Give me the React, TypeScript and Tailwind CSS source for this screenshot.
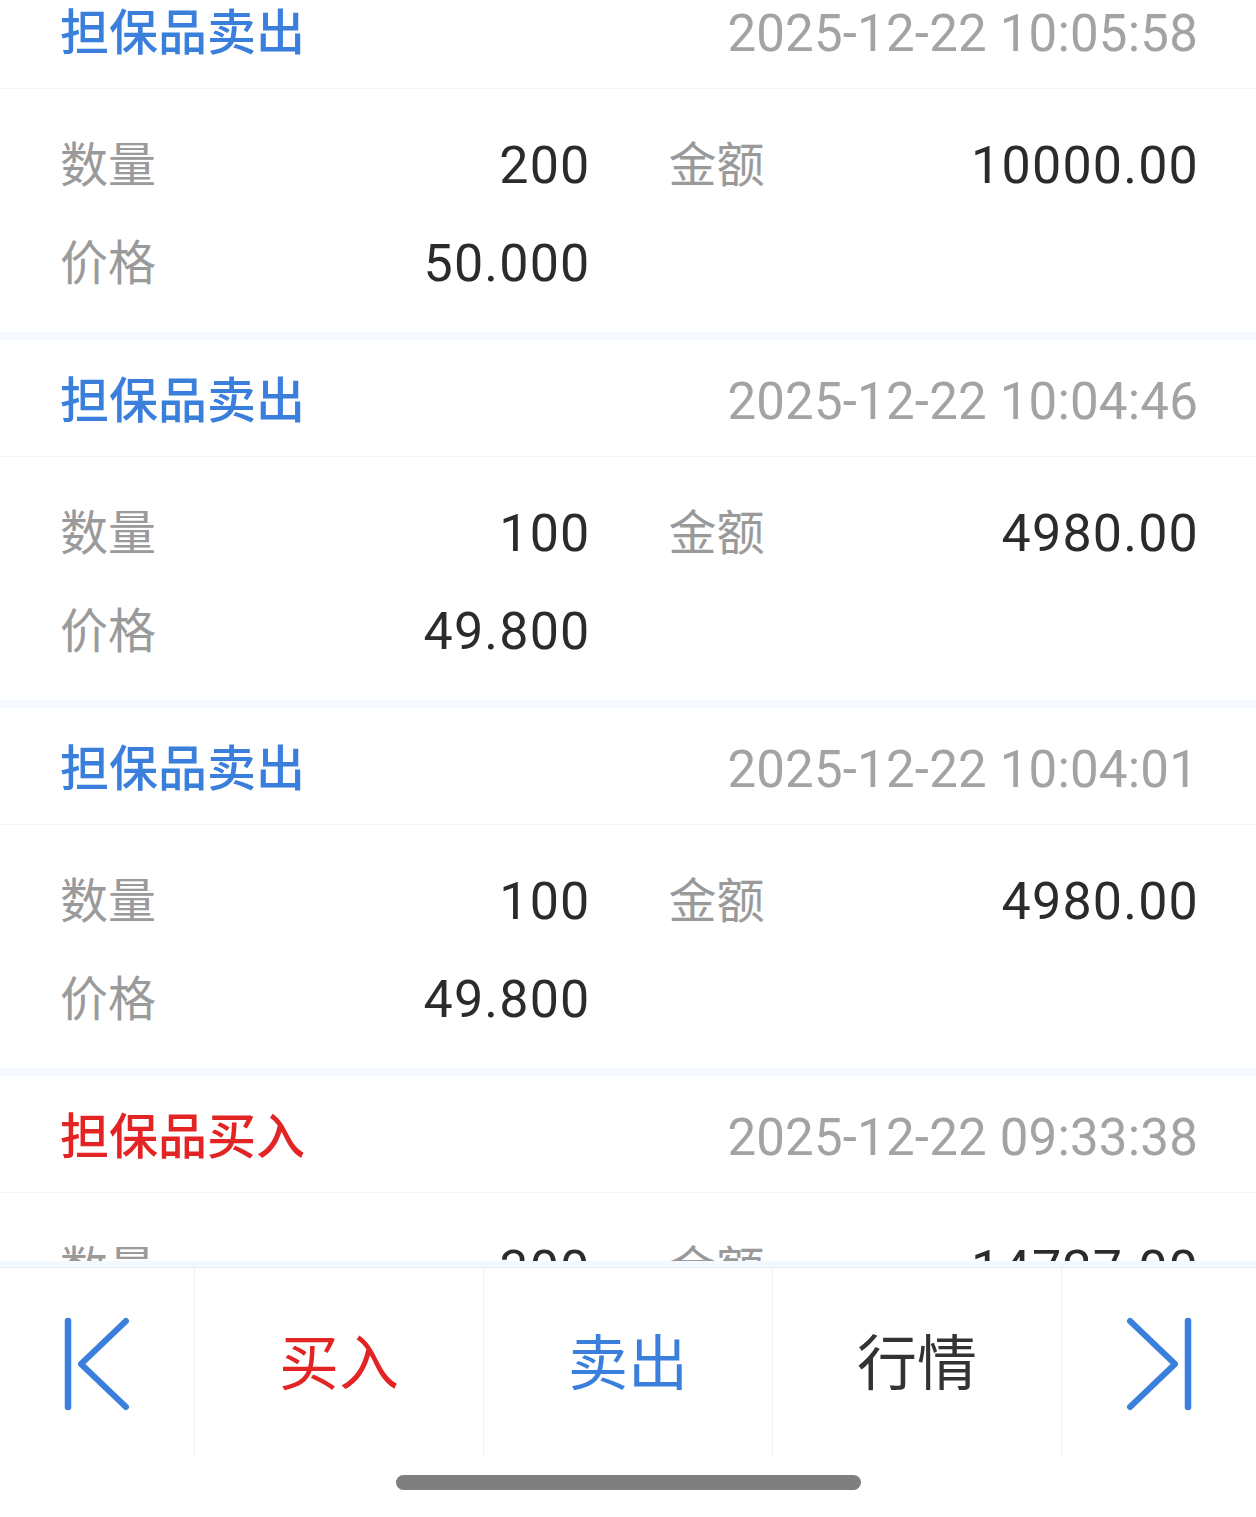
import React from "react";

type Rec = {
  kind: "sell" | "buy";
  time: string;
  qty: string;
  amount: string;
  price: string;
};

const records: Rec[] = [
  { kind: "sell", time: "2025-12-22 10:05:58", qty: "200", amount: "10000.00", price: "50.000" },
  { kind: "sell", time: "2025-12-22 10:04:46", qty: "100", amount: "4980.00", price: "49.800" },
  { kind: "sell", time: "2025-12-22 10:04:01", qty: "100", amount: "4980.00", price: "49.800" },
  { kind: "buy", time: "2025-12-22 09:33:38", qty: "300", amount: "14727.00", price: "49.090" },
];

const FONT = { fontFamily: "Roboto, 'Noto Sans CJK SC', sans-serif" };

function Cell({ label, value }: { label: string; value?: string }) {
  return (
    <div className="flex h-[98px] items-center justify-between">
      <span className="text-[48px] leading-none text-[#9a9a9a]">{label}</span>
      {value !== undefined && (
        <span className="-mr-[3px] text-[52px] leading-none tracking-[1.2px] text-[#2b2b2b]">{value}</span>
      )}
    </div>
  );
}

function Card({ r }: { r: Rec }) {
  return (
    <div className="bg-white">
      <div className="flex h-[117px] items-center justify-between border-b border-[#f6f6f6] px-[60px] pt-[6px]">
        <span
          className={
            "text-[49px] font-medium leading-none " +
            (r.kind === "sell" ? "text-[#3a7fdc]" : "text-[#e32424]")
          }
        >
          {r.kind === "sell" ? "担保品卖出" : "担保品买入"}
        </span>
        <span className="-mr-[2px] text-[51px] leading-none tracking-[0.2px] text-[#a3a3a3]">{r.time}</span>
      </div>
      <div className="grid grid-cols-2 gap-x-[81px] px-[60px] pb-[19px] pt-[28px]">
        <Cell label="数量" value={r.qty} />
        <Cell label="金额" value={r.amount} />
        <Cell label="价格" value={r.price} />
        <div />
      </div>
    </div>
  );
}

function FirstIcon() {
  return (
    <svg width="70" height="96" viewBox="0 0 70 96" fill="none">
      <path d="M6 5 V91" stroke="#3a7fdc" strokeWidth="6.5" strokeLinecap="round" />
      <path d="M64 5 L19 48 L64 91" stroke="#3a7fdc" strokeWidth="6" strokeLinecap="round" strokeLinejoin="round" />
    </svg>
  );
}

function LastIcon() {
  return (
    <svg width="70" height="96" viewBox="0 0 70 96" fill="none">
      <path d="M64 5 V91" stroke="#3a7fdc" strokeWidth="6.5" strokeLinecap="round" />
      <path d="M6 5 L51 48 L6 91" stroke="#3a7fdc" strokeWidth="6" strokeLinecap="round" strokeLinejoin="round" />
    </svg>
  );
}

export default function App() {
  return (
    <div className="flex h-[1517px] w-[1256px] flex-col overflow-hidden bg-white" style={FONT}>
      <div className="h-[1261px] shrink-0 overflow-hidden">
        <div className="-mt-[28px] flex flex-col gap-[8px] bg-[#f4f8fc]">
          {records.map((r, i) => (
            <Card key={i} r={r} />
          ))}
        </div>
      </div>
      <div className="h-[7px] shrink-0 border-b border-[#e9ebf0] bg-[#f4f9fe]" />
      <div className="flex h-[187px] shrink-0">
        <div className="flex w-[194px] items-center pl-[62px] pt-[4px]">
          <FirstIcon />
        </div>
        <div className="flex w-[289px] items-center justify-center border-l border-[#eeeff2] pt-[6px] text-[60px] leading-none text-[#e32424]">
          买入
        </div>
        <div className="flex w-[289px] items-center justify-center border-l border-[#eeeff2] pt-[6px] text-[60px] leading-none text-[#3a7fdc]">
          卖出
        </div>
        <div className="flex w-[289px] items-center justify-center border-l border-[#eeeff2] pt-[6px] text-[60px] leading-none text-[#333333]">
          行情
        </div>
        <div className="flex flex-1 items-center border-l border-[#eeeff2] pl-[62px] pt-[4px]">
          <LastIcon />
        </div>
      </div>
      <div className="flex flex-1 justify-center pt-[20px]">
        <div className="h-[15px] w-[465px] rounded-full bg-[#7f7f7f]" />
      </div>
    </div>
  );
}
